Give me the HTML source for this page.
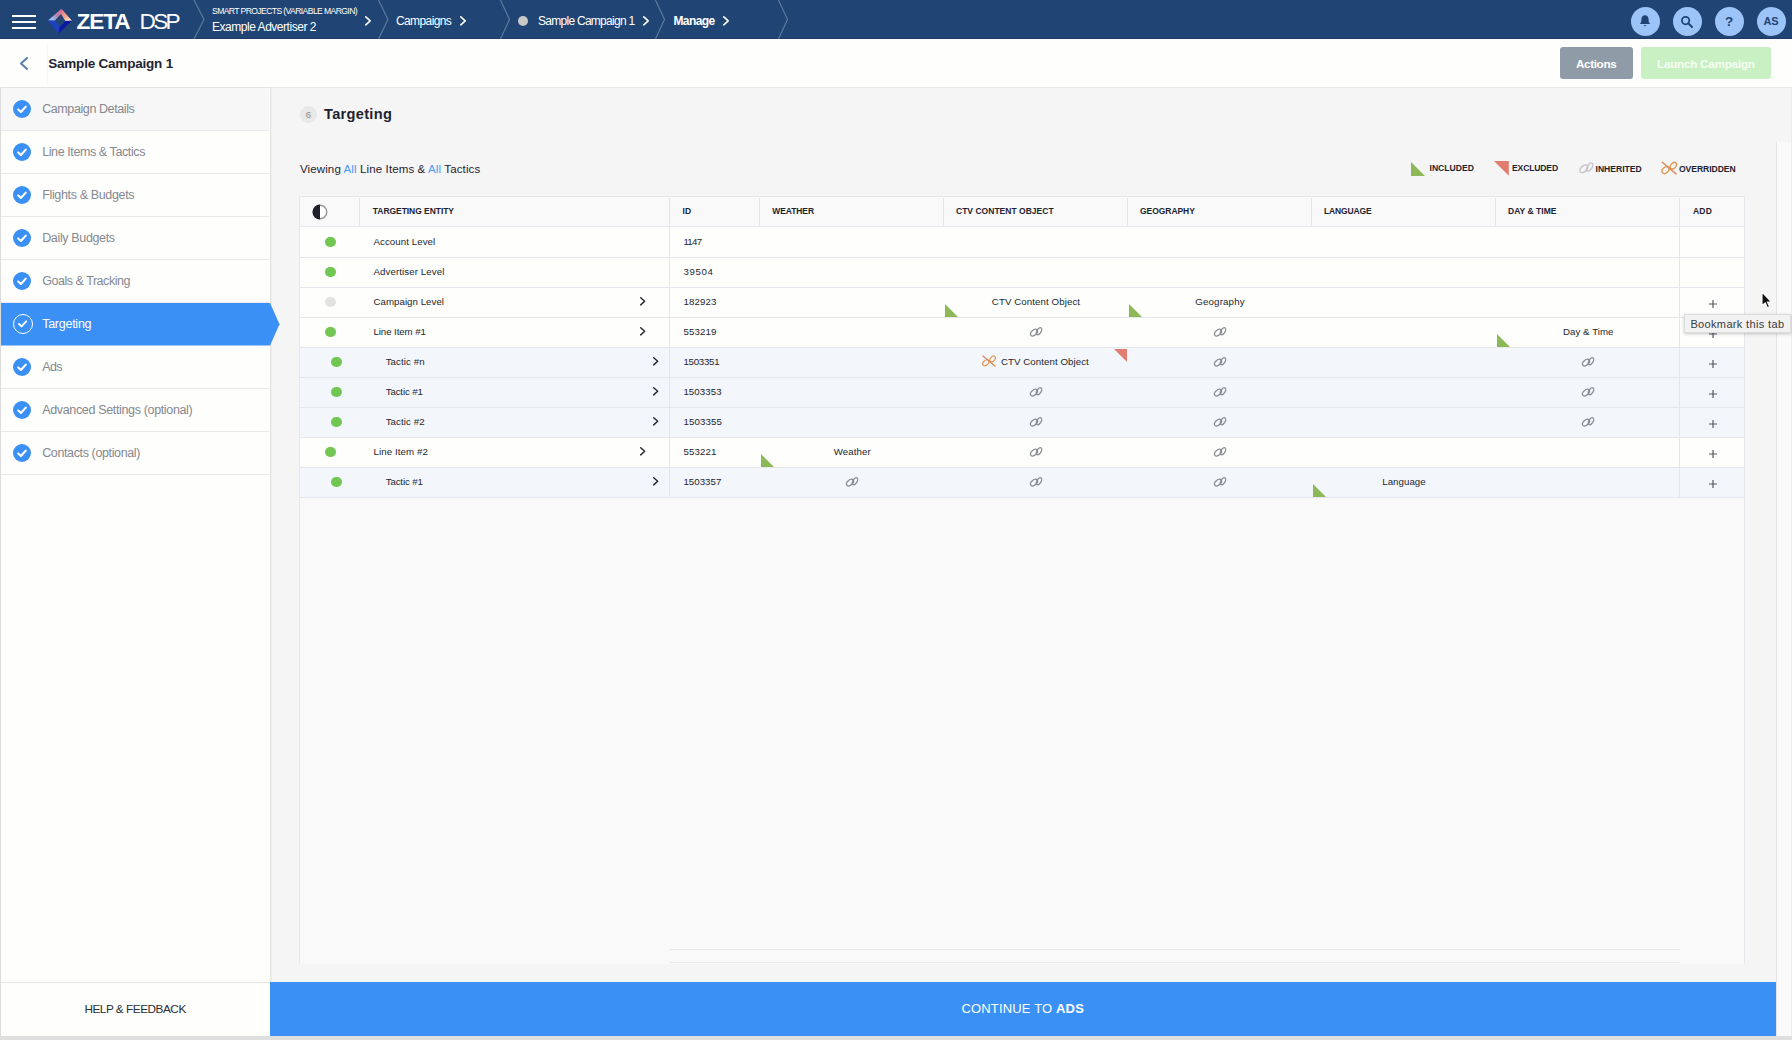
<!DOCTYPE html><html lang="en"><head><meta charset="utf-8"><title>Zeta DSP - Sample Campaign 1 - Targeting</title><style>
*{box-sizing:border-box;margin:0;padding:0}
html,body{width:1792px;height:1040px;overflow:hidden;background:#f5f5f5;font-family:'Liberation Sans',sans-serif;}
body{position:relative}
.t{position:absolute;white-space:pre;}
.abs{position:absolute}
#topbar{position:absolute;left:0;top:0;width:1792px;height:39px;background:#204574;border-bottom:1px solid #1b3b63}
#titlebar{position:absolute;left:0;top:39px;width:1792px;height:49px;background:#fefefd;border-bottom:1px solid #e9e9e9}
#sidebar{position:absolute;left:0;top:88px;width:270px;height:948px;background:#fefefd;border-left:1px solid #dcdcdc;box-shadow:1px 0 1.5px rgba(0,0,0,.09)}
.nav{position:absolute;left:0;width:268px;height:43px;border-bottom:1px solid #e9e9ec}
.nav.hover{background:#f7f7f7}
.ck{position:absolute;left:12px;width:18px;height:18px;border-radius:50%;background:#3a90f4}
#content{position:absolute;left:270px;top:88px;width:1522px;height:894px;background:#f5f5f5}
#vscroll{position:absolute;left:1776px;top:142px;width:14.5px;height:894px;background:#fafafa;border-left:1px solid #e6e6e6}
#redge{position:absolute;left:1790.5px;top:88px;width:1.5px;height:948px;background:#ececec}
#tablebox{position:absolute;left:299px;top:196px;width:1446px;height:768px;background:#f9f9f9;border:1px solid #e4e6eb;border-bottom:0}
#thead{position:absolute;left:300px;top:197px;width:1444px;height:30px;background:#f9f9f9;border-bottom:1px solid #e4e6eb}
.row{position:absolute;left:300px;width:1444px;height:30px;background:#fefefd}
.hl{position:absolute;left:300px;width:1444px;height:1px;background:#e4e6eb}
.row.tac{background:#f3f6fb}
.vsep{position:absolute;width:1px;background:#e4e6eb}
.dot{position:absolute;width:10.3px;height:10.3px;border-radius:50%;background:#72c653}
.dot.off{background:#e3e3e3}
.circ{position:absolute;top:6.6px;width:29px;height:29px;border-radius:50%;background:#9dc4f8}
#footer{position:absolute;left:270px;top:982px;width:1506px;height:54px;background:#3a90f4}
#help{position:absolute;left:1px;top:982px;width:268px;height:54px;background:#fefefd;border-top:1px solid #e6e6e6}
#bottomstrip{position:absolute;left:0;top:1036px;width:1792px;height:4px;background:#dfdfdf}
.btn{position:absolute;top:47px;height:32px;border-radius:3px}
#tooltip{position:absolute;left:1684px;top:314px;width:107px;height:19px;background:#f2f2f2;border:1px solid #dcdcdc;box-shadow:0 1px 3px rgba(0,0,0,.22)}
</style></head><body><main id="content"></main><div id="vscroll"></div><div id="redge"></div><header id="topbar"><div class="abs" style="left:12px;top:14.8px;width:24px;height:2px;background:#fff"></div><div class="abs" style="left:12px;top:20.8px;width:24px;height:2px;background:#fff"></div><div class="abs" style="left:12px;top:26.8px;width:24px;height:2px;background:#fff"></div><svg class="abs" style="left:40px;top:0px" width="40" height="39" viewBox="40 0 40 39"><defs><linearGradient id="lgA" gradientUnits="userSpaceOnUse" x1="48" y1="20.6" x2="61.5" y2="9"><stop offset="0" stop-color="#8ecaf8"/><stop offset=".3" stop-color="#9db6e6"/><stop offset=".55" stop-color="#b584a8"/><stop offset="1" stop-color="#e3709c"/></linearGradient><linearGradient id="lgB" gradientUnits="userSpaceOnUse" x1="61.5" y1="9" x2="71.9" y2="20.8"><stop offset="0" stop-color="#e87088"/><stop offset=".55" stop-color="#f2a690"/><stop offset="1" stop-color="#fffbe6"/></linearGradient></defs><path d="M47.9 20.6 L61.5 8.7 L61 14 L54.6 20.8 Z" fill="url(#lgA)"/><path d="M61.5 8.7 L71.9 20.8 L65.4 21 L61 14 Z" fill="url(#lgB)"/><path d="M47.9 20.6 L54.6 20.8 L59.8 27 L58.5 33.5 Z" fill="#1e40c4"/><path d="M71.9 20.8 L65.4 21 L59.8 27 L58.5 33.5 Z" fill="#0b18a2"/></svg><span class="t" style="left:76.50px;top:6.00px;font-size:22.6px;line-height:32px;letter-spacing:-1.078px;color:#fff;font-weight:700;">ZETA</span><span class="t" style="left:139.50px;top:6.00px;font-size:22.6px;line-height:32px;letter-spacing:-2.656px;color:#fff;">DSP</span><svg class="abs" style="left:0;top:0" width="800" height="39"><path d="M193.5 -1 L204 19.5 L193.5 40" fill="none" stroke="rgba(255,255,255,.28)" stroke-width="1.2"/><path d="M378 -1 L388 19.5 L378 40" fill="none" stroke="rgba(255,255,255,.28)" stroke-width="1.2"/><path d="M500 -1 L509.5 19.5 L500 40" fill="none" stroke="rgba(255,255,255,.28)" stroke-width="1.2"/><path d="M655 -1 L664.5 19.5 L655 40" fill="none" stroke="rgba(255,255,255,.28)" stroke-width="1.2"/><path d="M778 -1 L787.5 19.5 L778 40" fill="none" stroke="rgba(255,255,255,.28)" stroke-width="1.2"/></svg><span class="t" style="left:212.00px;top:4.70px;font-size:8.6px;line-height:12px;letter-spacing:-0.602px;color:#fff;">SMART PROJECTS (VARIABLE MARGIN)</span><span class="t" style="left:212.00px;top:18.60px;font-size:12px;line-height:17px;letter-spacing:-0.470px;color:#fff;">Example Advertiser 2</span><svg class="abs" style="left:364px;top:15.2px" width="8" height="11.6" viewBox="-1 -1 8 11.6"><path d="M0.8 0.8 L5.2 4.8 L0.8 8.799999999999999" fill="none" stroke="#fff" stroke-width="1.6" stroke-linecap="round" stroke-linejoin="round"/></svg><span class="t" style="left:396.00px;top:13.00px;font-size:12px;line-height:17px;letter-spacing:-0.611px;color:#fff;">Campaigns</span><svg class="abs" style="left:459px;top:15.2px" width="8" height="11.6" viewBox="-1 -1 8 11.6"><path d="M0.8 0.8 L5.2 4.8 L0.8 8.799999999999999" fill="none" stroke="#fff" stroke-width="1.6" stroke-linecap="round" stroke-linejoin="round"/></svg><div class="abs" style="left:518px;top:15.5px;width:10px;height:10px;border-radius:50%;background:#c9c9c9"></div><span class="t" style="left:538.00px;top:13.00px;font-size:12px;line-height:17px;letter-spacing:-0.726px;color:#fff;">Sample Campaign 1</span><svg class="abs" style="left:641.6px;top:15.2px" width="8" height="11.6" viewBox="-1 -1 8 11.6"><path d="M0.8 0.8 L5.2 4.8 L0.8 8.799999999999999" fill="none" stroke="#fff" stroke-width="1.6" stroke-linecap="round" stroke-linejoin="round"/></svg><span class="t" style="left:673.40px;top:13.00px;font-size:12px;line-height:17px;letter-spacing:-0.565px;color:#fff;font-weight:700;">Manage</span><svg class="abs" style="left:721.8px;top:15.2px" width="8" height="11.6" viewBox="-1 -1 8 11.6"><path d="M0.8 0.8 L5.2 4.8 L0.8 8.799999999999999" fill="none" stroke="#fff" stroke-width="1.6" stroke-linecap="round" stroke-linejoin="round"/></svg><div class="circ" style="left:1630.5px"></div><div class="circ" style="left:1672.5px"></div><div class="circ" style="left:1714.5px"></div><div class="circ" style="left:1756.5px"></div><svg class="abs" style="left:1638px;top:14px" width="14" height="15" viewBox="0 0 14 15"><path d="M7 1.2 C4.6 1.2 3.4 3 3.4 5.4 C3.4 8 2.6 9 1.8 10 L12.2 10 C11.4 9 10.6 8 10.6 5.4 C10.6 3 9.4 1.2 7 1.2 Z" fill="#204574"/><path d="M5.6 11.3 a1.5 1.5 0 0 0 2.8 0 Z" fill="#204574"/></svg><svg class="abs" style="left:1680px;top:14.6px" width="14" height="14" viewBox="0 0 14 14"><circle cx="5.6" cy="5.6" r="3.7" fill="none" stroke="#204574" stroke-width="1.8"/><path d="M8.4 8.4 L12 12" stroke="#204574" stroke-width="2" stroke-linecap="round"/></svg><span class="t" style="left:1724.88px;top:12.00px;font-size:13.5px;line-height:19px;letter-spacing:0.000px;color:#204574;font-weight:700;">?</span><span class="t" style="left:1763.50px;top:14.40px;font-size:11px;line-height:15px;letter-spacing:-0.141px;color:#204574;font-weight:700;">AS</span></header><div id="titlebar"><div class="abs" style="left:47px;top:5px;width:1px;height:40px;background:#f8f8fa"></div></div><svg class="abs" style="left:19px;top:56px" width="10" height="15" viewBox="0 0 10 15"><path d="M8 1.9 L2 7.5 L8 13.1" fill="none" stroke="#5d7fae" stroke-width="2" stroke-linecap="round" stroke-linejoin="round"/></svg><span class="t" style="left:48.20px;top:53.50px;font-size:13.5px;line-height:19px;letter-spacing:-0.206px;color:#1f2330;font-weight:700;">Sample Campaign 1</span><div class="btn" style="left:1560px;width:73px;background:#8f9ba7"></div><span class="t" style="left:1576.00px;top:56.00px;font-size:11.7px;line-height:16px;letter-spacing:-0.366px;color:#fff;font-weight:700;">Actions</span><div class="btn" style="left:1641px;width:130px;background:#c9f0c2"></div><span class="t" style="left:1657.00px;top:56.00px;font-size:11.7px;line-height:16px;letter-spacing:-0.241px;color:#f6fdf4;font-weight:700;">Launch Campaign</span><aside id="sidebar"><div class="nav hover" style="top:0px"><div class="ck" style="top:12px"><svg width="18" height="18" viewBox="0 0 18 18" style="position:absolute;left:0;top:0"><path d="M5.2 9.4 L7.9 12 L12.8 6.6" fill="none" stroke="#fff" stroke-width="2.1" stroke-linecap="round" stroke-linejoin="round"/></svg></div></div><div class="nav" style="top:43px"><div class="ck" style="top:12px"><svg width="18" height="18" viewBox="0 0 18 18" style="position:absolute;left:0;top:0"><path d="M5.2 9.4 L7.9 12 L12.8 6.6" fill="none" stroke="#fff" stroke-width="2.1" stroke-linecap="round" stroke-linejoin="round"/></svg></div></div><div class="nav" style="top:86px"><div class="ck" style="top:12px"><svg width="18" height="18" viewBox="0 0 18 18" style="position:absolute;left:0;top:0"><path d="M5.2 9.4 L7.9 12 L12.8 6.6" fill="none" stroke="#fff" stroke-width="2.1" stroke-linecap="round" stroke-linejoin="round"/></svg></div></div><div class="nav" style="top:129px"><div class="ck" style="top:12px"><svg width="18" height="18" viewBox="0 0 18 18" style="position:absolute;left:0;top:0"><path d="M5.2 9.4 L7.9 12 L12.8 6.6" fill="none" stroke="#fff" stroke-width="2.1" stroke-linecap="round" stroke-linejoin="round"/></svg></div></div><div class="nav" style="top:172px"><div class="ck" style="top:12px"><svg width="18" height="18" viewBox="0 0 18 18" style="position:absolute;left:0;top:0"><path d="M5.2 9.4 L7.9 12 L12.8 6.6" fill="none" stroke="#fff" stroke-width="2.1" stroke-linecap="round" stroke-linejoin="round"/></svg></div></div><div class="nav" style="top:214px;height:44px;border:0;"></div><div class="nav" style="top:258px"><div class="ck" style="top:12px"><svg width="18" height="18" viewBox="0 0 18 18" style="position:absolute;left:0;top:0"><path d="M5.2 9.4 L7.9 12 L12.8 6.6" fill="none" stroke="#fff" stroke-width="2.1" stroke-linecap="round" stroke-linejoin="round"/></svg></div></div><div class="nav" style="top:301px"><div class="ck" style="top:12px"><svg width="18" height="18" viewBox="0 0 18 18" style="position:absolute;left:0;top:0"><path d="M5.2 9.4 L7.9 12 L12.8 6.6" fill="none" stroke="#fff" stroke-width="2.1" stroke-linecap="round" stroke-linejoin="round"/></svg></div></div><div class="nav" style="top:344px"><div class="ck" style="top:12px"><svg width="18" height="18" viewBox="0 0 18 18" style="position:absolute;left:0;top:0"><path d="M5.2 9.4 L7.9 12 L12.8 6.6" fill="none" stroke="#fff" stroke-width="2.1" stroke-linecap="round" stroke-linejoin="round"/></svg></div></div></aside><svg class="abs" style="left:1px;top:302.5px" width="280" height="43" viewBox="0 0 280 43"><path d="M0 0 H269 L278.5 21.3 L269 42.6 H0 Z" fill="#3a90f4"/></svg><div class="abs" style="left:12.8px;top:314px;width:20px;height:20px;border-radius:50%;border:1.4px solid #fff"><svg width="17.2" height="17.2" viewBox="0 0 18 18" style="position:absolute;left:0;top:0"><path d="M5.2 9.4 L7.9 12 L12.8 6.6" fill="none" stroke="#fff" stroke-width="1.9" stroke-linecap="round" stroke-linejoin="round"/></svg></div><span class="t" style="left:42.20px;top:100.30px;font-size:12.5px;line-height:18px;letter-spacing:-0.404px;color:#85888e;">Campaign Details</span><span class="t" style="left:42.20px;top:143.30px;font-size:12.5px;line-height:18px;letter-spacing:-0.407px;color:#85888e;">Line Items &amp; Tactics</span><span class="t" style="left:42.20px;top:186.30px;font-size:12.5px;line-height:18px;letter-spacing:-0.351px;color:#85888e;">Flights &amp; Budgets</span><span class="t" style="left:42.20px;top:229.30px;font-size:12.5px;line-height:18px;letter-spacing:-0.356px;color:#85888e;">Daily Budgets</span><span class="t" style="left:42.20px;top:272.30px;font-size:12.5px;line-height:18px;letter-spacing:-0.462px;color:#85888e;">Goals &amp; Tracking</span><span class="t" style="left:42.20px;top:315.30px;font-size:12.5px;line-height:18px;letter-spacing:-0.260px;color:#fff;">Targeting</span><span class="t" style="left:42.20px;top:358.30px;font-size:12.5px;line-height:18px;letter-spacing:-0.582px;color:#85888e;">Ads</span><span class="t" style="left:42.20px;top:401.30px;font-size:12.5px;line-height:18px;letter-spacing:-0.344px;color:#85888e;">Advanced Settings (optional)</span><span class="t" style="left:42.20px;top:444.30px;font-size:12.5px;line-height:18px;letter-spacing:-0.375px;color:#85888e;">Contacts (optional)</span><div id="help"></div><span class="t" style="left:84.40px;top:1001.00px;font-size:11.8px;line-height:17px;letter-spacing:-0.482px;color:#2a2d36;">HELP &amp; FEEDBACK</span><div class="abs" style="left:299.8px;top:106.1px;width:17.3px;height:17.3px;border-radius:50%;background:#e8e8e8"></div><span class="t" style="left:305.83px;top:108.00px;font-size:9.6px;line-height:13px;letter-spacing:0.000px;color:#8c8c8c;">6</span><span class="t" style="left:324.00px;top:103.90px;font-size:14.6px;line-height:20px;letter-spacing:0.299px;color:#1f2330;font-weight:700;">Targeting</span><span class="t" style="left:300.00px;top:160.80px;font-size:11.5px;line-height:16px;letter-spacing:0.119px;color:#1f2330;">Viewing <span style="color:#4a9af5">All</span> Line Items &amp; <span style="color:#4a9af5">All</span> Tactics</span><svg class="abs" style="left:1411.2px;top:161.6px" width="14.8" height="14.8"><path d="M0 0 L14.8 14.8 L0 14.8 Z" fill="#8cb857"/></svg><span class="t" style="left:1429.50px;top:162.30px;font-size:8.6px;line-height:12px;letter-spacing:0.012px;color:#1f2330;font-weight:700;">INCLUDED</span><svg class="abs" style="left:1494.2px;top:161.3px" width="14.8" height="14.8"><path d="M0 0 L14.8 0 L14.8 14.8 Z" fill="#e07d70"/></svg><span class="t" style="left:1512.00px;top:162.30px;font-size:8.6px;line-height:12px;letter-spacing:-0.160px;color:#1f2330;font-weight:700;">EXCLUDED</span><svg class="abs" style="left:1576.8px;top:160.14999999999998px" width="18.4" height="16.099999999999998" viewBox="-8 -7 16 14"><g fill="none" stroke="#c4c6ca" stroke-width="1.25"><ellipse cx="-2" cy="0.6" rx="4.1" ry="2.5" transform="rotate(-42 -2 0.6)"/><ellipse cx="3" cy="-0.8" rx="3.9" ry="2.1" transform="rotate(-57 3 -0.8)"/></g></svg><span class="t" style="left:1595.60px;top:163.10px;font-size:8.6px;line-height:12px;letter-spacing:-0.036px;color:#1f2330;font-weight:700;">INHERITED</span><svg class="abs" style="left:1660.0px;top:160.14999999999998px" width="18.4" height="16.099999999999998" viewBox="-8 -7 16 14"><g fill="none" stroke="#e09a58" stroke-width="1.25" stroke-linecap="round"><ellipse cx="-3.2" cy="1.8" rx="3.5" ry="2.4" transform="rotate(-42 -3.2 1.8)"/><ellipse cx="3.6" cy="-2" rx="3.3" ry="2.2" transform="rotate(-50 3.6 -2)"/><path d="M-6 -5.1 L6 5.1" stroke="#dd8a55"/></g></svg><span class="t" style="left:1679.00px;top:163.10px;font-size:8.6px;line-height:12px;letter-spacing:-0.061px;color:#1f2330;font-weight:700;">OVERRIDDEN</span><div id="tablebox"></div><div id="thead"></div><div class="vsep" style="left:359px;top:198px;height:28px"></div><div class="vsep" style="left:669px;top:198px;height:28px"></div><div class="vsep" style="left:759px;top:198px;height:28px"></div><div class="vsep" style="left:943px;top:198px;height:28px"></div><div class="vsep" style="left:1127px;top:198px;height:28px"></div><div class="vsep" style="left:1311px;top:198px;height:28px"></div><div class="vsep" style="left:1495px;top:198px;height:28px"></div><div class="vsep" style="left:1679px;top:198px;height:28px"></div><svg class="abs" style="left:312px;top:203.9px" width="16" height="16" viewBox="-8 -8 16 16"><circle r="6.8" fill="#fff" stroke="#94969c" stroke-width="1.4"/><path d="M0 -7.5 A7.5 7.5 0 0 0 0 7.5 Z" fill="#1e212c"/></svg><span class="t" style="left:372.80px;top:204.90px;font-size:8.5px;line-height:12px;letter-spacing:-0.051px;color:#1f2330;font-weight:700;">TARGETING ENTITY</span><span class="t" style="left:682.60px;top:204.90px;font-size:8.5px;line-height:12px;letter-spacing:0.050px;color:#1f2330;font-weight:700;">ID</span><span class="t" style="left:772.30px;top:204.90px;font-size:8.5px;line-height:12px;letter-spacing:-0.092px;color:#1f2330;font-weight:700;">WEATHER</span><span class="t" style="left:956.00px;top:204.90px;font-size:8.5px;line-height:12px;letter-spacing:0.018px;color:#1f2330;font-weight:700;">CTV CONTENT OBJECT</span><span class="t" style="left:1140.00px;top:204.90px;font-size:8.5px;line-height:12px;letter-spacing:-0.052px;color:#1f2330;font-weight:700;">GEOGRAPHY</span><span class="t" style="left:1324.00px;top:204.90px;font-size:8.5px;line-height:12px;letter-spacing:-0.143px;color:#1f2330;font-weight:700;">LANGUAGE</span><span class="t" style="left:1508.00px;top:204.90px;font-size:8.5px;line-height:12px;letter-spacing:0.031px;color:#1f2330;font-weight:700;">DAY &amp; TIME</span><span class="t" style="left:1693.00px;top:204.90px;font-size:8.5px;line-height:12px;letter-spacing:0.193px;color:#1f2330;font-weight:700;">ADD</span><div class="row" style="top:227px"></div><div class="row" style="top:257px"></div><div class="row" style="top:287px"></div><div class="row" style="top:317px"></div><div class="row tac" style="top:347px"></div><div class="row tac" style="top:377px"></div><div class="row tac" style="top:407px"></div><div class="row" style="top:437px"></div><div class="row tac" style="top:467px"></div><div class="hl" style="top:257px"></div><div class="hl" style="top:287px"></div><div class="hl" style="top:317px"></div><div class="hl" style="top:347px"></div><div class="hl" style="top:377px"></div><div class="hl" style="top:407px"></div><div class="hl" style="top:437px"></div><div class="hl" style="top:467px"></div><div class="hl" style="top:497px"></div><div class="vsep" style="left:669px;top:227px;height:270px"></div><div class="vsep" style="left:1679px;top:227px;height:270px"></div><div class="dot" style="left:325.35px;top:237.15px"></div><span class="t" style="left:373.50px;top:235.00px;font-size:9.7px;line-height:14px;letter-spacing:0.072px;color:#23262f;">Account Level</span><span class="t" style="left:683.40px;top:235.00px;font-size:9.7px;line-height:14px;letter-spacing:-0.711px;color:#23262f;">1147</span><div class="dot" style="left:325.35px;top:267.15000000000003px"></div><span class="t" style="left:373.50px;top:265.00px;font-size:9.7px;line-height:14px;letter-spacing:0.096px;color:#23262f;">Advertiser Level</span><span class="t" style="left:683.40px;top:265.00px;font-size:9.7px;line-height:14px;letter-spacing:0.669px;color:#23262f;">39504</span><div class="dot off" style="left:325.35px;top:297.15000000000003px"></div><span class="t" style="left:373.50px;top:295.00px;font-size:9.7px;line-height:14px;letter-spacing:0.035px;color:#23262f;">Campaign Level</span><svg class="abs" style="left:639.4px;top:296.40000000000003px" width="7.4" height="10.6" viewBox="-1 -1 7.4 10.6"><path d="M0.7 0.7 L4.7 4.3 L0.7 7.8999999999999995" fill="none" stroke="#22252e" stroke-width="1.4" stroke-linecap="round" stroke-linejoin="round"/></svg><span class="t" style="left:683.40px;top:295.00px;font-size:9.7px;line-height:14px;letter-spacing:0.112px;color:#23262f;">182923</span><svg class="abs" style="left:944.6px;top:303.5px" width="13" height="13"><path d="M0 0 L13 13 L0 13 Z" fill="#8cb857"/></svg><span class="t" style="left:991.85px;top:295.00px;font-size:9.7px;line-height:14px;letter-spacing:0.090px;color:#23262f;">CTV Content Object</span><svg class="abs" style="left:1128.6px;top:303.5px" width="13" height="13"><path d="M0 0 L13 13 L0 13 Z" fill="#8cb857"/></svg><span class="t" style="left:1195.25px;top:295.00px;font-size:9.7px;line-height:14px;letter-spacing:0.174px;color:#23262f;">Geography</span><svg class="abs" style="left:1707.8px;top:299.1px" width="10" height="10" viewBox="-5 -5 10 10"><path d="M-4 0H4M0 -4V4" stroke="#555a63" stroke-width="1.2" fill="none"/></svg><div class="dot" style="left:325.35px;top:327.15000000000003px"></div><span class="t" style="left:373.50px;top:325.00px;font-size:9.7px;line-height:14px;letter-spacing:-0.086px;color:#23262f;">Line Item #1</span><svg class="abs" style="left:639.4px;top:326.40000000000003px" width="7.4" height="10.6" viewBox="-1 -1 7.4 10.6"><path d="M0.7 0.7 L4.7 4.3 L0.7 7.8999999999999995" fill="none" stroke="#22252e" stroke-width="1.4" stroke-linecap="round" stroke-linejoin="round"/></svg><span class="t" style="left:683.40px;top:325.00px;font-size:9.7px;line-height:14px;letter-spacing:0.112px;color:#23262f;">553219</span><svg class="abs" style="left:1028.0px;top:324.5px" width="16.0" height="14.0" viewBox="-8 -7 16 14"><g fill="none" stroke="#85888e" stroke-width="1.25"><ellipse cx="-2" cy="0.6" rx="4.1" ry="2.5" transform="rotate(-42 -2 0.6)"/><ellipse cx="3" cy="-0.8" rx="3.9" ry="2.1" transform="rotate(-57 3 -0.8)"/></g></svg><svg class="abs" style="left:1212.0px;top:324.5px" width="16.0" height="14.0" viewBox="-8 -7 16 14"><g fill="none" stroke="#85888e" stroke-width="1.25"><ellipse cx="-2" cy="0.6" rx="4.1" ry="2.5" transform="rotate(-42 -2 0.6)"/><ellipse cx="3" cy="-0.8" rx="3.9" ry="2.1" transform="rotate(-57 3 -0.8)"/></g></svg><svg class="abs" style="left:1496.6px;top:333.5px" width="13" height="13"><path d="M0 0 L13 13 L0 13 Z" fill="#8cb857"/></svg><span class="t" style="left:1563.00px;top:325.00px;font-size:9.7px;line-height:14px;letter-spacing:0.042px;color:#23262f;">Day &amp; Time</span><svg class="abs" style="left:1707.8px;top:329.1px" width="10" height="10" viewBox="-5 -5 10 10"><path d="M-4 0H4M0 -4V4" stroke="#555a63" stroke-width="1.2" fill="none"/></svg><div class="dot" style="left:331.45000000000005px;top:357.15000000000003px"></div><span class="t" style="left:385.70px;top:355.00px;font-size:9.7px;line-height:14px;letter-spacing:0.085px;color:#23262f;">Tactic #n</span><svg class="abs" style="left:651.8px;top:356.40000000000003px" width="7.4" height="10.6" viewBox="-1 -1 7.4 10.6"><path d="M0.7 0.7 L4.7 4.3 L0.7 7.8999999999999995" fill="none" stroke="#22252e" stroke-width="1.4" stroke-linecap="round" stroke-linejoin="round"/></svg><span class="t" style="left:683.40px;top:355.00px;font-size:9.7px;line-height:14px;letter-spacing:-0.246px;color:#23262f;">1503351</span><svg class="abs" style="left:1114px;top:349.0px" width="13" height="13"><path d="M0 0 L13 0 L13 13 Z" fill="#e07d70"/></svg><svg class="abs" style="left:981.1px;top:354.40000000000003px" width="16.0" height="14.0" viewBox="-8 -7 16 14"><g fill="none" stroke="#e09a58" stroke-width="1.25" stroke-linecap="round"><ellipse cx="-3.2" cy="1.8" rx="3.5" ry="2.4" transform="rotate(-42 -3.2 1.8)"/><ellipse cx="3.6" cy="-2" rx="3.3" ry="2.2" transform="rotate(-50 3.6 -2)"/><path d="M-6 -5.1 L6 5.1" stroke="#dd8a55"/></g></svg><span class="t" style="left:1001.00px;top:355.00px;font-size:9.7px;line-height:14px;letter-spacing:0.062px;color:#23262f;">CTV Content Object</span><svg class="abs" style="left:1212.0px;top:354.5px" width="16.0" height="14.0" viewBox="-8 -7 16 14"><g fill="none" stroke="#85888e" stroke-width="1.25"><ellipse cx="-2" cy="0.6" rx="4.1" ry="2.5" transform="rotate(-42 -2 0.6)"/><ellipse cx="3" cy="-0.8" rx="3.9" ry="2.1" transform="rotate(-57 3 -0.8)"/></g></svg><svg class="abs" style="left:1580.25px;top:354.5px" width="16.0" height="14.0" viewBox="-8 -7 16 14"><g fill="none" stroke="#85888e" stroke-width="1.25"><ellipse cx="-2" cy="0.6" rx="4.1" ry="2.5" transform="rotate(-42 -2 0.6)"/><ellipse cx="3" cy="-0.8" rx="3.9" ry="2.1" transform="rotate(-57 3 -0.8)"/></g></svg><svg class="abs" style="left:1707.8px;top:359.1px" width="10" height="10" viewBox="-5 -5 10 10"><path d="M-4 0H4M0 -4V4" stroke="#555a63" stroke-width="1.2" fill="none"/></svg><div class="dot" style="left:331.45000000000005px;top:387.15000000000003px"></div><span class="t" style="left:385.70px;top:385.00px;font-size:9.7px;line-height:14px;letter-spacing:-0.137px;color:#23262f;">Tactic #1</span><svg class="abs" style="left:651.8px;top:386.40000000000003px" width="7.4" height="10.6" viewBox="-1 -1 7.4 10.6"><path d="M0.7 0.7 L4.7 4.3 L0.7 7.8999999999999995" fill="none" stroke="#22252e" stroke-width="1.4" stroke-linecap="round" stroke-linejoin="round"/></svg><span class="t" style="left:683.40px;top:385.00px;font-size:9.7px;line-height:14px;letter-spacing:0.069px;color:#23262f;">1503353</span><svg class="abs" style="left:1028.0px;top:384.5px" width="16.0" height="14.0" viewBox="-8 -7 16 14"><g fill="none" stroke="#85888e" stroke-width="1.25"><ellipse cx="-2" cy="0.6" rx="4.1" ry="2.5" transform="rotate(-42 -2 0.6)"/><ellipse cx="3" cy="-0.8" rx="3.9" ry="2.1" transform="rotate(-57 3 -0.8)"/></g></svg><svg class="abs" style="left:1212.0px;top:384.5px" width="16.0" height="14.0" viewBox="-8 -7 16 14"><g fill="none" stroke="#85888e" stroke-width="1.25"><ellipse cx="-2" cy="0.6" rx="4.1" ry="2.5" transform="rotate(-42 -2 0.6)"/><ellipse cx="3" cy="-0.8" rx="3.9" ry="2.1" transform="rotate(-57 3 -0.8)"/></g></svg><svg class="abs" style="left:1580.25px;top:384.5px" width="16.0" height="14.0" viewBox="-8 -7 16 14"><g fill="none" stroke="#85888e" stroke-width="1.25"><ellipse cx="-2" cy="0.6" rx="4.1" ry="2.5" transform="rotate(-42 -2 0.6)"/><ellipse cx="3" cy="-0.8" rx="3.9" ry="2.1" transform="rotate(-57 3 -0.8)"/></g></svg><svg class="abs" style="left:1707.8px;top:389.1px" width="10" height="10" viewBox="-5 -5 10 10"><path d="M-4 0H4M0 -4V4" stroke="#555a63" stroke-width="1.2" fill="none"/></svg><div class="dot" style="left:331.45000000000005px;top:417.15000000000003px"></div><span class="t" style="left:385.70px;top:415.00px;font-size:9.7px;line-height:14px;letter-spacing:0.085px;color:#23262f;">Tactic #2</span><svg class="abs" style="left:651.8px;top:416.40000000000003px" width="7.4" height="10.6" viewBox="-1 -1 7.4 10.6"><path d="M0.7 0.7 L4.7 4.3 L0.7 7.8999999999999995" fill="none" stroke="#22252e" stroke-width="1.4" stroke-linecap="round" stroke-linejoin="round"/></svg><span class="t" style="left:683.40px;top:415.00px;font-size:9.7px;line-height:14px;letter-spacing:0.112px;color:#23262f;">1503355</span><svg class="abs" style="left:1028.0px;top:414.5px" width="16.0" height="14.0" viewBox="-8 -7 16 14"><g fill="none" stroke="#85888e" stroke-width="1.25"><ellipse cx="-2" cy="0.6" rx="4.1" ry="2.5" transform="rotate(-42 -2 0.6)"/><ellipse cx="3" cy="-0.8" rx="3.9" ry="2.1" transform="rotate(-57 3 -0.8)"/></g></svg><svg class="abs" style="left:1212.0px;top:414.5px" width="16.0" height="14.0" viewBox="-8 -7 16 14"><g fill="none" stroke="#85888e" stroke-width="1.25"><ellipse cx="-2" cy="0.6" rx="4.1" ry="2.5" transform="rotate(-42 -2 0.6)"/><ellipse cx="3" cy="-0.8" rx="3.9" ry="2.1" transform="rotate(-57 3 -0.8)"/></g></svg><svg class="abs" style="left:1580.25px;top:414.5px" width="16.0" height="14.0" viewBox="-8 -7 16 14"><g fill="none" stroke="#85888e" stroke-width="1.25"><ellipse cx="-2" cy="0.6" rx="4.1" ry="2.5" transform="rotate(-42 -2 0.6)"/><ellipse cx="3" cy="-0.8" rx="3.9" ry="2.1" transform="rotate(-57 3 -0.8)"/></g></svg><svg class="abs" style="left:1707.8px;top:419.1px" width="10" height="10" viewBox="-5 -5 10 10"><path d="M-4 0H4M0 -4V4" stroke="#555a63" stroke-width="1.2" fill="none"/></svg><div class="dot" style="left:325.35px;top:447.15000000000003px"></div><span class="t" style="left:373.50px;top:445.00px;font-size:9.7px;line-height:14px;letter-spacing:0.098px;color:#23262f;">Line Item #2</span><svg class="abs" style="left:639.4px;top:446.40000000000003px" width="7.4" height="10.6" viewBox="-1 -1 7.4 10.6"><path d="M0.7 0.7 L4.7 4.3 L0.7 7.8999999999999995" fill="none" stroke="#22252e" stroke-width="1.4" stroke-linecap="round" stroke-linejoin="round"/></svg><span class="t" style="left:683.40px;top:445.00px;font-size:9.7px;line-height:14px;letter-spacing:0.112px;color:#23262f;">553221</span><svg class="abs" style="left:761.1px;top:453.5px" width="13" height="13"><path d="M0 0 L13 13 L0 13 Z" fill="#8cb857"/></svg><span class="t" style="left:833.75px;top:445.00px;font-size:9.7px;line-height:14px;letter-spacing:0.080px;color:#23262f;">Weather</span><svg class="abs" style="left:1028.0px;top:444.5px" width="16.0" height="14.0" viewBox="-8 -7 16 14"><g fill="none" stroke="#85888e" stroke-width="1.25"><ellipse cx="-2" cy="0.6" rx="4.1" ry="2.5" transform="rotate(-42 -2 0.6)"/><ellipse cx="3" cy="-0.8" rx="3.9" ry="2.1" transform="rotate(-57 3 -0.8)"/></g></svg><svg class="abs" style="left:1212.0px;top:444.5px" width="16.0" height="14.0" viewBox="-8 -7 16 14"><g fill="none" stroke="#85888e" stroke-width="1.25"><ellipse cx="-2" cy="0.6" rx="4.1" ry="2.5" transform="rotate(-42 -2 0.6)"/><ellipse cx="3" cy="-0.8" rx="3.9" ry="2.1" transform="rotate(-57 3 -0.8)"/></g></svg><svg class="abs" style="left:1707.8px;top:449.1px" width="10" height="10" viewBox="-5 -5 10 10"><path d="M-4 0H4M0 -4V4" stroke="#555a63" stroke-width="1.2" fill="none"/></svg><div class="dot" style="left:331.45000000000005px;top:477.15000000000003px"></div><span class="t" style="left:385.70px;top:475.00px;font-size:9.7px;line-height:14px;letter-spacing:-0.137px;color:#23262f;">Tactic #1</span><svg class="abs" style="left:651.8px;top:476.40000000000003px" width="7.4" height="10.6" viewBox="-1 -1 7.4 10.6"><path d="M0.7 0.7 L4.7 4.3 L0.7 7.8999999999999995" fill="none" stroke="#22252e" stroke-width="1.4" stroke-linecap="round" stroke-linejoin="round"/></svg><span class="t" style="left:683.40px;top:475.00px;font-size:9.7px;line-height:14px;letter-spacing:0.040px;color:#23262f;">1503357</span><svg class="abs" style="left:844.25px;top:474.5px" width="16.0" height="14.0" viewBox="-8 -7 16 14"><g fill="none" stroke="#85888e" stroke-width="1.25"><ellipse cx="-2" cy="0.6" rx="4.1" ry="2.5" transform="rotate(-42 -2 0.6)"/><ellipse cx="3" cy="-0.8" rx="3.9" ry="2.1" transform="rotate(-57 3 -0.8)"/></g></svg><svg class="abs" style="left:1028.0px;top:474.5px" width="16.0" height="14.0" viewBox="-8 -7 16 14"><g fill="none" stroke="#85888e" stroke-width="1.25"><ellipse cx="-2" cy="0.6" rx="4.1" ry="2.5" transform="rotate(-42 -2 0.6)"/><ellipse cx="3" cy="-0.8" rx="3.9" ry="2.1" transform="rotate(-57 3 -0.8)"/></g></svg><svg class="abs" style="left:1212.0px;top:474.5px" width="16.0" height="14.0" viewBox="-8 -7 16 14"><g fill="none" stroke="#85888e" stroke-width="1.25"><ellipse cx="-2" cy="0.6" rx="4.1" ry="2.5" transform="rotate(-42 -2 0.6)"/><ellipse cx="3" cy="-0.8" rx="3.9" ry="2.1" transform="rotate(-57 3 -0.8)"/></g></svg><svg class="abs" style="left:1312.6px;top:483.5px" width="13" height="13"><path d="M0 0 L13 13 L0 13 Z" fill="#8cb857"/></svg><span class="t" style="left:1382.25px;top:475.00px;font-size:9.7px;line-height:14px;letter-spacing:0.049px;color:#23262f;">Language</span><svg class="abs" style="left:1707.8px;top:479.1px" width="10" height="10" viewBox="-5 -5 10 10"><path d="M-4 0H4M0 -4V4" stroke="#555a63" stroke-width="1.2" fill="none"/></svg><div class="abs" style="left:670px;top:949px;width:1010px;height:14px;background:#f9f9f9;border-top:1px solid #e9e9ec;border-bottom:1px solid #e9e9ec"></div><div id="tooltip"></div><span class="t" style="left:1690.40px;top:316.80px;font-size:11px;line-height:15px;letter-spacing:0.350px;color:#3a3a3a;">Bookmark this tab</span><svg class="abs" style="left:1760px;top:291px" width="14" height="20" viewBox="0 0 14 20"><path d="M2 1.2 L2 14.6 L5.2 11.8 L7.4 16.8 L9.6 15.8 L7.4 11 L11.6 11 Z" fill="#111" stroke="#fff" stroke-width="1.1" stroke-linejoin="round"/></svg><div id="footer"></div><span class="t" style="left:961.50px;top:1000.00px;font-size:13px;line-height:18px;letter-spacing:0.156px;color:#fff;">CONTINUE TO <b>ADS</b></span><div id="bottomstrip"></div></body></html>
